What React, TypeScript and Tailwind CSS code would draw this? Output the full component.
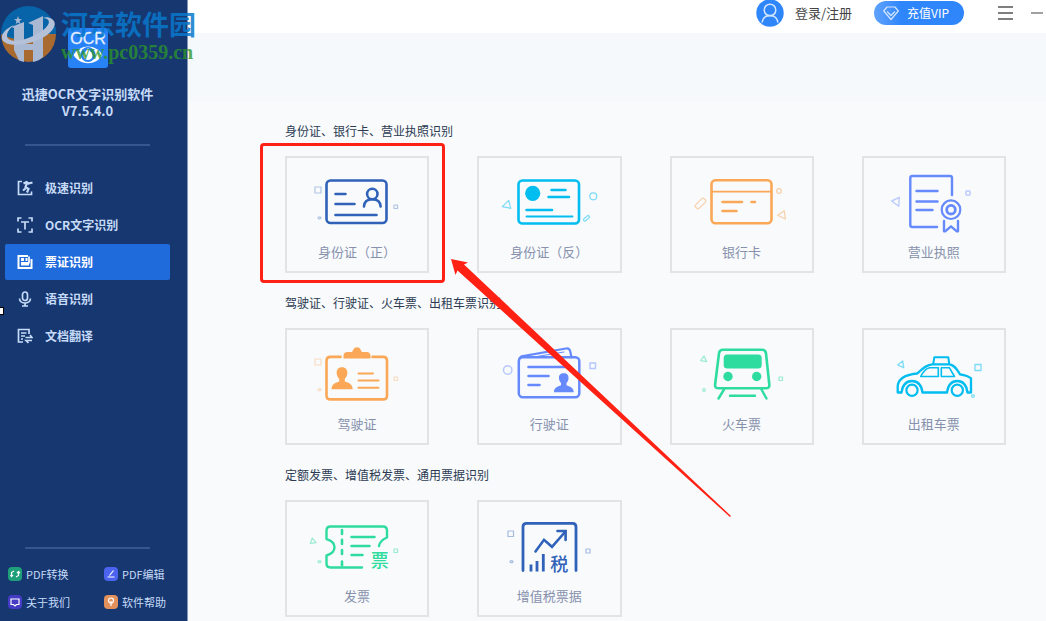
import type { ReactNode } from 'react';

interface CardItem {
  label: string;
  color: string;
  icon: ReactNode;
  marked?: boolean;
}

interface Section {
  title: string;
  items: CardItem[];
}

function IdFrontIcon() {
  return (
    <>
      <rect x="41.5" y="24.5" width="60" height="42.5" rx="4" strokeWidth="2.6" />
      <path d="M50.5 38h10M50.5 48h19M50.5 59h41" strokeWidth="2.6" />
      <circle cx="87.3" cy="38" r="5.2" strokeWidth="2.6" />
      <path d="M79 50.5c.2-4.8 3.6-7.3 8.3-7.3s8.1 2.5 8.3 7.3" strokeWidth="2.6" />
      <g opacity=".35" strokeWidth="1.2">
        <rect x="30" y="31" width="6" height="6" />
        <rect x="109" y="49" width="3.5" height="3.5" />
        <ellipse cx="34.5" cy="61.8" rx="1.5" ry="1" />
      </g>
    </>
  );
}

function IdBackIcon() {
  return (
    <>
      <rect x="41.5" y="24.5" width="60.5" height="43" rx="4" strokeWidth="2.6" />
      <circle cx="55.7" cy="37.3" r="7.6" fill="currentColor" stroke="none" />
      <path d="M74.5 34h14M71.5 41h20.5M49.5 54h25.5" strokeWidth="2.5" />
      <path d="M49.5 60.5h46" strokeWidth="1.8" />
      <g opacity=".5" strokeWidth="1.2">
        <path d="M25.3 50.7l6.4-6.4 2 8z" />
        <circle cx="116.3" cy="40.3" r="3.5" />
        <rect x="106" y="61" width="7" height="2.6" rx="1.3" transform="rotate(-40 109.5 62.3)" />
      </g>
    </>
  );
}

function BankCardIcon() {
  return (
    <>
      <rect x="41.5" y="24.3" width="60" height="43" rx="4" strokeWidth="2.6" />
      <path d="M42 35.7h59" strokeWidth="1.8" />
      <path d="M52.5 46h19.5M81.5 46h3.5M52.5 55h14" strokeWidth="2.6" />
      <g opacity=".5" strokeWidth="1.2">
        <rect x="24.5" y="45" width="12" height="5" rx="1.5" transform="rotate(-45 30.5 47.5)" />
        <circle cx="109" cy="35" r="2.3" />
        <path d="M107.7 59.3l6.6-4.6 1 8.3z" />
      </g>
    </>
  );
}

function LicenseIcon() {
  return (
    <>
      <path d="M75 71H50.3q-2 0-2-2V22q0-2 2-2H88q2 0 2 2v17" strokeWidth="2.4" />
      <path d="M54.5 35h21M54.5 45.5h21M54.5 54h16" strokeWidth="2.4" />
      <circle cx="89" cy="53.7" r="9.3" strokeWidth="2.2" />
      <circle cx="89" cy="53.7" r="4.3" strokeWidth="2.8" />
      <path d="M82 65v10.3h1.2l5.8-5 5.8 5H96V65" strokeWidth="2.4" />
      <g opacity=".4" strokeWidth="1.4">
        <path d="M29.7 45l7.6-3.7-.6 9z" />
        <circle cx="106" cy="37" r="2.3" />
      </g>
    </>
  );
}

function DriverIcon() {
  return (
    <>
      <path
        d="M55.5 28.9H45.5q-4 0-4 4v34.5q0 4 4 4h52.5q4 0 4-4V32.9q0-4-4-4H87.5"
        strokeWidth="2.6"
      />
      <path
        d="M58.5 30.5v-2.5q0-4 4-4h4.5c1.5-1.5 1.5-4.7 5-4.7s3.5 3.2 5 4.7h4.5q4 0 4 4v2.5z"
        fill="currentColor"
        stroke="none"
      />
      <path
        d="M57 39.3c3.8 0 5.5 2.7 5.3 6-.1 2.7-1.3 4.2-2.5 5.5v2.7c3.5 1.4 7.9 2.2 7.9 7.8H46.5c0-5.6 4.4-6.4 7.7-7.8v-2.7c-1.2-1.3-2.4-2.8-2.5-5.5-.2-3.3 1.5-6 5.3-6z"
        fill="currentColor"
        stroke="none"
      />
      <path d="M73.5 45.4h14.5M73.5 52.5h20M73.5 59.7h20" strokeWidth="2" />
      <g opacity=".35" strokeWidth="1.2">
        <rect x="30" y="31" width="6" height="6" />
        <rect x="109" y="49" width="3.5" height="3.5" />
        <ellipse cx="34.5" cy="61.7" rx="1.5" ry="1" />
      </g>
    </>
  );
}

function VehicleIcon() {
  return (
    <>
      <path d="M42.5 30l2-1.6L89 20.5q3.5-.6 4.2 2.8l1.3 6" strokeWidth="2.2" />
      <path d="M60 28.5l27-4.5" strokeWidth="1" />
      <rect x="41.8" y="29.3" width="60.5" height="40" rx="4" strokeWidth="2.5" />
      <path d="M51.5 39h38M51.5 48h20M51.5 57h11" strokeWidth="2.6" />
      <path
        d="M86.7 45.3c3.6 0 5 2 4.8 5-.1 2-.9 3.6-2 4.7v2.3c3.2 1.5 7.2 1.9 7.2 6.9H77c0-5 3.8-5.4 7-6.9V55c-1.1-1.1-1.9-2.7-2-4.7-.2-3 1.1-5 4.7-5z"
        fill="currentColor"
        stroke="none"
      />
      <g opacity=".45" strokeWidth="1.4">
        <circle cx="30.7" cy="42" r="4.2" />
        <rect x="113" y="35" width="5.5" height="5.5" />
      </g>
    </>
  );
}

function TrainIcon() {
  return (
    <>
      <path
        d="M53 21.8h39q3.5 0 4 3.5l3.3 31.2q.4 3.7-3.5 3.7H48.6q-3.9 0-3.5-3.7L49 25.3q.5-3.5 4-3.5z"
        strokeWidth="2.6"
      />
      <rect x="53.7" y="26.5" width="38" height="14" rx="3.5" fill="currentColor" stroke="none" />
      <circle cx="58" cy="48.5" r="4.7" fill="currentColor" stroke="none" />
      <circle cx="86.7" cy="48.5" r="4.7" fill="currentColor" stroke="none" />
      <path d="M54 61.5l-5.5 9M91.5 61.5l5 9M60 67.7h25" strokeWidth="2.4" />
      <g opacity=".45" strokeWidth="1.2">
        <path d="M30.7 32.7L34 28l2.7 5.7z" />
        <rect x="109" y="49" width="3.5" height="3.5" />
        <circle cx="34" cy="62" r="1.3" />
      </g>
    </>
  );
}

function TaxiIcon() {
  return (
    <>
      <path
        d="M35.7 64.5V59c0-8.5 7-12.3 19.3-13.5 6-5 9-8.7 15.5-9.2h17c5.5 1 7.3 5.2 10.5 10 4.5.8 8.5 1.8 11 4v14.2h-3.5C104.5 57 101 53 95.3 53S86 57 85 64.5H60.5C59.5 57 55.7 53 50 53s-9.5 4-10.5 11.5z"
        strokeWidth="2.3"
      />
      <path d="M71.3 35.5l1-6.2h14l.9 6.2" strokeWidth="2" />
      <path d="M58.7 48.5c2.3-4.5 5-8 9-8.8h8.6v8.8zM79.3 39.7h8l5.2 8.8H79.3z" strokeWidth="1.6" />
      <circle cx="50" cy="62.3" r="5.6" strokeWidth="2.2" />
      <circle cx="95.3" cy="62.3" r="5.6" strokeWidth="2.2" />
      <g opacity=".5" strokeWidth="1.3">
        <path d="M35.7 37l5-4 1 6.7z" />
        <rect x="113" y="36.5" width="6" height="6" />
        <circle cx="111" cy="68" r="1.3" />
      </g>
    </>
  );
}

function InvoiceIcon() {
  return (
    <>
      <path
        d="M77 67.5H45.5q-4 0-4-4V55.5c5-1.5 8-4.3 8-8.2s-3-6.7-8-8.2V30.5q0-4 4-4h52.5q4 0 4 4v7c-4.5 1.8-7.3 4.5-8 8.5"
        strokeWidth="2.4"
      />
      <path d="M57 30v4M57 39.7v4.3M57 50v4M57 61.5v4" strokeWidth="2.6" />
      <path d="M66.5 37h23M66.5 46h18M66.5 55h11" strokeWidth="2.5" />
      <text
        x="94.7"
        y="66.5"
        textAnchor="middle"
        fontSize="18"
        fontWeight="500"
        fill="currentColor"
        stroke="none"
      >
        票
      </text>
      <g opacity=".45" strokeWidth="1.2">
        <path d="M25.3 43.3l2-5.3 3.7 4.7z" />
        <rect x="109" y="49" width="3.5" height="3.5" />
        <ellipse cx="34.5" cy="61.7" rx="1.5" ry="1" />
      </g>
    </>
  );
}

function VatIcon() {
  return (
    <>
      <path d="M46 70.5V26.8q0-3.5 3.5-3.5H95.5q3.5 0 3.5 3.5v43.7" strokeWidth="2.8" />
      <path d="M58.5 51.5L67 39.8l8 7L88 32" strokeWidth="2.6" strokeLinejoin="miter" />
      <path d="M80.5 31H88.6v9" strokeWidth="2.6" strokeLinejoin="miter" />
      <path d="M54 71.5v-7M60 71.5V61M66.3 71.5V54" strokeWidth="2.8" strokeLinecap="butt" />
      <text
        x="82.3"
        y="71"
        textAnchor="middle"
        fontSize="18"
        fontWeight="500"
        fill="currentColor"
        stroke="none"
      >
        税
      </text>
      <g opacity=".4" strokeWidth="1.2">
        <rect x="31" y="31" width="5.5" height="5.5" />
        <rect x="109" y="49" width="4" height="4" />
        <ellipse cx="34.5" cy="61.7" rx="1.5" ry="1" />
      </g>
    </>
  );
}

const sections: Section[] = [
  {
    title: '身份证、银行卡、营业执照识别',
    items: [
      { label: '身份证（正）', color: 'text-[#2f62b8]', icon: <IdFrontIcon />, marked: true },
      { label: '身份证（反）', color: 'text-[#02bdf0]', icon: <IdBackIcon /> },
      { label: '银行卡', color: 'text-[#faa857]', icon: <BankCardIcon /> },
      { label: '营业执照', color: 'text-[#668afc]', icon: <LicenseIcon /> },
    ],
  },
  {
    title: '驾驶证、行驶证、火车票、出租车票识别',
    items: [
      { label: '驾驶证', color: 'text-[#faa857]', icon: <DriverIcon /> },
      { label: '行驶证', color: 'text-[#668afc]', icon: <VehicleIcon /> },
      { label: '火车票', color: 'text-[#2fdc9f]', icon: <TrainIcon /> },
      { label: '出租车票', color: 'text-[#02bdf0]', icon: <TaxiIcon /> },
    ],
  },
  {
    title: '定额发票、增值税发票、通用票据识别',
    items: [
      { label: '发票', color: 'text-[#2fdc9f]', icon: <InvoiceIcon /> },
      { label: '增值税票据', color: 'text-[#2f62b8]', icon: <VatIcon /> },
    ],
  },
];

const navItems = [
  {
    label: '极速识别',
    icon: (
      <>
        <path d="M5 1.5H1.5v13h13V11.500" />
        <path d="M6.5 3.5l3-1.500 2 1.500 4-1M10 3L8.500 7l3 2-1.500 3.500M8.500 8.500L6 10.500" strokeWidth="2.2" />
      </>
    ),
  },
  {
    label: 'OCR文字识别',
    icon: (
      <path d="M1 4.5V1h3.5M11.5 1H15v3.5M15 11.5V15h-3.5M4.5 15H1v-3.5M4 5h8M8 5v7.5" />
    ),
  },
  {
    label: '票证识别',
    active: true,
    icon: (
      <>
        <path d="M11 2H1.5v12h13V5" strokeWidth="2" />
        <path d="M4 4h3v3H4zM8.5 4h2v3h-2zM4 8h8v3.5H4z" fill="currentColor" stroke="none" />
        <path d="M12 2.500v7" />
      </>
    ),
  },
  {
    label: '语音识别',
    icon: (
      <>
        <rect x="5.5" y="1" width="5" height="8.5" rx="2.5" />
        <path d="M2.5 7.5c0 6 11 6 11 0M8 12v3M5 15h6" />
      </>
    ),
  },
  {
    label: '文档翻译',
    icon: (
      <>
        <path d="M12 6V1.5H1.5V14H6M4 5h5.5M4 8h4M4 11h2" />
        <path d="M8.5 9.5H15l-2-2.5M15 12.5H9l2.500 2.500" />
      </>
    ),
  },
];

const tools = [
  {
    label: 'PDF转换',
    bg: 'bg-[#1fa07a]',
    icon: <path d="M6 4L3.5 5.5V9M8 10l2.5-1.500V5M2.5 8l1 1.500L5 8M9 6l1.500-1.500L12 6" />,
  },
  {
    label: 'PDF编辑',
    bg: 'bg-[#4b63ee]',
    icon: <path d="M9.5 3.5l-4 5M3.500 10h7" />,
  },
  {
    label: '关于我们',
    bg: 'bg-[#453bc4]',
    icon: <path d="M3 4h8v5.5H8.5L7 11 5.500 9.500H3z" />,
  },
  {
    label: '软件帮助',
    bg: 'bg-[#e2905c]',
    icon: (
      <>
        <circle cx="7" cy="5.5" r="2.5" />
        <path d="M7 6v5" />
      </>
    ),
  },
];

function Sidebar() {
  return (
    <aside className="flex w-[188px] shrink-0 flex-col border-r border-[#8296bb] bg-[#163770] text-[#c6dbf8]">
      <div className="flex flex-col items-center pt-7 pr-3">
        <svg className="h-10 w-10" viewBox="0 0 40 40" role="img" aria-label="OCR">
          <rect width="40" height="40" rx="3" fill="#2882f7" />
          <text
            x="20"
            y="16"
            textAnchor="middle"
            fontSize="16"
            fill="#e4f0ff"
            stroke="#e4f0ff"
            strokeWidth=".3"
            fontFamily="'Liberation Sans', sans-serif"
          >
            OCR
          </text>
          <path d="M5.5 27C12 15.5 28 15.5 34.5 27 28 38 12 38 5.5 27z" fill="#fff" />
          <circle cx="20" cy="26.5" r="7.5" fill="#2882f7" />
          <circle cx="20" cy="27.500" r="4.5" fill="#fff" />
          <path d="M20 20l-3 5h6z" fill="#fff" />
        </svg>
        <h1 className="mt-[17px] text-center text-[13px] leading-[17px] font-bold">
          迅捷OCR文字识别软件
          <br />
          V7.5.4.0
        </h1>
      </div>
      <hr className="mt-[25px] mr-[37px] ml-[25px] border-t-2 border-[#36568f]" />

      <nav className="mt-6 mr-[17px] ml-[5px] flex flex-col gap-px">
        {navItems.map((item) => (
          <a
            key={item.label}
            href="#"
            className={
              item.active
                ? 'flex h-9 items-center gap-3 rounded-xs bg-[#206bdb] pl-3 text-[12px] font-bold text-white'
                : 'flex h-9 items-center gap-3 pl-3 text-[12px] font-bold'
            }
          >
            <svg
              className="h-4 w-4"
              viewBox="0 0 16 16"
              fill="none"
              stroke="currentColor"
              strokeWidth="1.7"
            >
              {item.icon}
            </svg>
            {item.label}
          </a>
        ))}
      </nav>

      <hr className="mt-auto mr-[37px] ml-[25px] border-t-2 border-[#36568f]" />
      <div className="mt-[11px] grid grid-cols-[96px_1fr] pb-[5px] pl-2">
        {tools.map((tool) => (
          <a key={tool.label} href="#" className="flex h-7 items-center gap-1 text-[11px]">
            <svg
              className={`h-3.5 w-3.5 rounded-sm ${tool.bg}`}
              viewBox="0 0 14 14"
              fill="none"
              stroke="#fff"
              strokeWidth="1.2"
            >
              {tool.icon}
            </svg>
            {tool.label}
          </a>
        ))}
      </div>
    </aside>
  );
}

function TopBar() {
  return (
    <header className="flex h-[33px] items-center justify-end bg-white pr-[3px] pb-[7px]">
      <button type="button" className="flex items-center gap-[11px] text-[13px] text-[#444]">
        <svg className="h-7 w-7" viewBox="0 0 28 28" fill="none" stroke="#d3e6ff" strokeWidth="1.5">
          <circle cx="14" cy="14" r="13.7" fill="#2f86fb" stroke="none" />
          <circle cx="14" cy="11" r="5.8" />
          <path d="M6 23.5c1-5 4-7 8-7s7 2 8 7" />
        </svg>
        登录/注册
      </button>
      <button
        type="button"
        className="ml-[22px] flex h-6 w-[90px] items-center gap-2 rounded-full bg-linear-to-r from-[#5fa2fc] to-[#2f86fb] to-30% pl-[9px] text-[12px] text-white"
      >
        <svg
          className="h-4 w-4"
          viewBox="0 0 16 16"
          fill="none"
          stroke="#d3e6ff"
          strokeWidth="1.2"
          strokeLinejoin="round"
        >
          <path d="M4 2h8l3.3 4L8 14.5.7 6z" />
          <path d="M4 6.5l4 4 4-4" />
        </svg>
        充值VIP
      </button>
      <button type="button" aria-label="菜单" className="ml-[34px]">
        <svg className="h-4 w-[15px]" viewBox="0 0 15 16" stroke="#555" strokeWidth="1.4">
          <path d="M0 2h15M0 8h15M0 14h15" />
        </svg>
      </button>
      <button type="button" aria-label="最小化" className="ml-[18px]">
        <svg className="h-4 w-3" viewBox="0 0 12 16" stroke="#777" strokeWidth="1.4">
          <path d="M0 8h12" />
        </svg>
      </button>
    </header>
  );
}

function DocumentCard({ item }: { item: CardItem }) {
  return (
    <div className="relative">
      <button
        type="button"
        className="flex h-[117px] w-full flex-col items-center border-2 border-[#e2e3e5] text-[13px] leading-5 text-[#8791ac]"
      >
        <svg
          className={`h-[84px] w-36 shrink-0 ${item.color}`}
          viewBox="0 2 144 84"
          fill="none"
          stroke="currentColor"
          strokeLinecap="round"
          strokeLinejoin="round"
        >
          {item.icon}
        </svg>
        {item.label}
      </button>
      {item.marked && (
        <div className="pointer-events-none absolute -top-[13px] -right-4 -bottom-[10px] -left-[25px] rounded-sm border-3 border-[#ff2114]" />
      )}
    </div>
  );
}

function Watermark() {
  return (
    <div className="pointer-events-none absolute top-0 left-0 flex items-start">
      <svg className="mt-[5px] h-[58px] w-[58px] shrink-0" viewBox="0 0 58 58">
        <path d="M1 29a27.5 28 0 0 1 55 0z" fill="#0764a8" />
        <path d="M1 29a27.5 28 0 0 0 55 0z" fill="#a96a30" />
        <path d="M1 29q27 14 55-7v7z" fill="#0764a8" />
        <path d="M14 45V32h10v25l-5-1.500zM33 57V34l10-4v22q-4 4-10 5z" fill="#a9b8d3" />
        <path d="M24 45h9v-6h-9z" fill="#a9b8d3" />
        <path d="M11 22l13-5v16H14V23zM28 18l15-7v20l-10 3V20z" fill="#a9b8d3" />
        <path
          d="M14 20C5 24 1 29 2 34c3 9 27 7 42-2 10-6 14-14 8-18-3-2-7-2-9-1 9 1 7 7-1 13-13 9-34 14-35 5 0-4 3-8 7-11z"
          fill="#b4c1d9"
        />
        <path d="M18 11l1 3 3 .3-2.500 1.700.8 3L18 17.500 15.700 19l.8-3-2.500-1.700 3-.3z" fill="#a9b8d3" />
      </svg>
      <div className="ml-[3px] pt-2">
        <div className="text-[27px] leading-8 font-bold text-[#0878cc]/85">河东软件园</div>
        <div className="font-['Liberation_Serif',serif] text-[20px] leading-6 font-bold text-[#2b952b]/80">
          www.pc0359.cn
        </div>
      </div>
    </div>
  );
}

export default function App() {
  return (
    <div className="relative flex min-h-screen overflow-hidden bg-[#f8fafc] font-['Noto_Sans_CJK_SC',sans-serif]">
      <Sidebar />
      <div className="flex min-w-0 flex-1 flex-col">
        <TopBar />
        <div className="h-[69px] bg-[#f5f9fc]" />
        <main className="flex flex-col gap-5 pt-[19px] pr-10 pb-1 pl-[97px]">
          {sections.map((section) => (
            <section key={section.title}>
              <h2 className="mb-[15px] text-[12px] leading-5 text-[#2c3a52]">{section.title}</h2>
              <div className="grid grid-cols-4 gap-12">
                {section.items.map((item) => (
                  <DocumentCard key={item.label} item={item} />
                ))}
              </div>
            </section>
          ))}
        </main>
      </div>

      <Watermark />
      <div className="absolute top-[307px] -left-px h-2 w-[5px] border border-black bg-white" />
      <svg
        className="pointer-events-none absolute top-[258px] left-[450px] h-[260px] w-[282px]"
        viewBox="450 258 282 260"
        fill="#ff2114"
      >
        <path d="M451 259l17 3.5-4 2L731 516l-1 1L457.5 270.5l-2 4.500z" />
      </svg>
    </div>
  );
}
